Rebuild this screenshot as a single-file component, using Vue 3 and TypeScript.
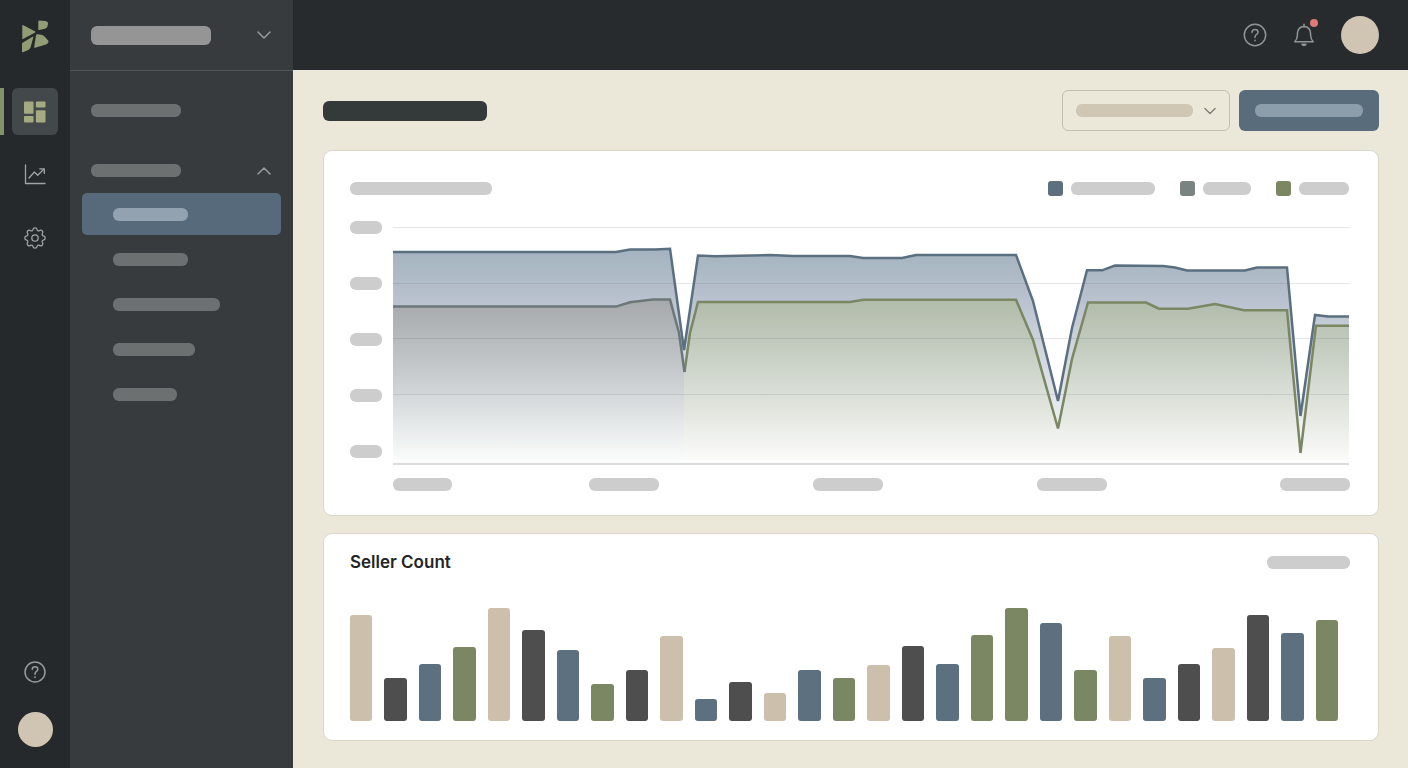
<script setup lang="ts">
type Tone = 'sand' | 'dark' | 'blue' | 'green'

interface Bar {
  tone: Tone
  value: number
}

const navItems: { id: string; size: string; active: boolean }[] = [
  { id: 'first', size: 'w75', active: true },
  { id: 'second', size: 'w75', active: false },
  { id: 'third', size: 'w107', active: false },
  { id: 'fourth', size: 'w82', active: false },
  { id: 'fifth', size: 'w64', active: false },
]

const bars: Bar[] = [
  { tone: 'sand', value: 106 },
  { tone: 'dark', value: 43 },
  { tone: 'blue', value: 57 },
  { tone: 'green', value: 74 },
  { tone: 'sand', value: 113 },
  { tone: 'dark', value: 91 },
  { tone: 'blue', value: 71 },
  { tone: 'green', value: 37 },
  { tone: 'dark', value: 51 },
  { tone: 'sand', value: 85 },
  { tone: 'blue', value: 22 },
  { tone: 'dark', value: 39 },
  { tone: 'sand', value: 28 },
  { tone: 'blue', value: 51 },
  { tone: 'green', value: 43 },
  { tone: 'sand', value: 56 },
  { tone: 'dark', value: 75 },
  { tone: 'blue', value: 57 },
  { tone: 'green', value: 86 },
  { tone: 'green', value: 113 },
  { tone: 'blue', value: 98 },
  { tone: 'green', value: 51 },
  { tone: 'sand', value: 85 },
  { tone: 'blue', value: 43 },
  { tone: 'dark', value: 57 },
  { tone: 'sand', value: 73 },
  { tone: 'dark', value: 106 },
  { tone: 'blue', value: 88 },
  { tone: 'green', value: 101 },
]
const maxValue = Math.max(...bars.map((b) => b.value))

type Point = [number, number]

const blue: Point[] = [
  [0, 31], [223, 31], [237, 28.5], [262, 28.5], [277, 27.7], [291, 129], [305, 34.5], [322, 35.2],
  [377, 34], [400, 35], [457, 35], [470, 37], [509, 37], [523, 34], [623, 34], [640, 80],
  [665, 180], [679, 107], [694, 49.3], [709, 49.3], [722, 44.5], [770, 45], [782, 46.5], [794, 49.5],
  [852, 49.5], [864, 46.5], [894, 46.5], [907.5, 195], [922, 94], [935, 95.5], [956, 95.5],
]
const gray: Point[] = [
  [0, 85.6], [223, 85.6], [237, 81.3], [260, 78.6], [277, 78.6], [286, 112], [291.5, 151],
]
const green: Point[] = [
  [291.5, 151], [297, 112], [305, 81], [457, 81], [470, 78.7], [623, 78.7], [640, 119], [665, 207.5],
  [679, 138], [695, 81.5], [753, 81.5], [766, 87.7], [795, 87.7], [822, 83], [851, 89.3], [894, 89.3],
  [907.5, 232], [923, 104.7], [956, 104.7],
]

const baseline = 243
const line = (pts: Point[]): string => 'M' + pts.map((p) => p.join(' ')).join('L')
const area = (pts: Point[]): string =>
  `${line(pts)}L${pts[pts.length - 1][0]} ${baseline}L${pts[0][0]} ${baseline}Z`

const gearPath = ((): string => {
  const at = (deg: number): string => {
    const a = (deg * Math.PI) / 180
    return `${(12 + 8.6 * Math.cos(a)).toFixed(2)} ${(12 + 8.6 * Math.sin(a)).toFixed(2)}`
  }
  let d = `M${at(-14)}`
  for (let k = 0; k < 8; k++) {
    d += `A2.1 2.1 0 0 1 ${at(k * 45 + 14)}A1.5 1.5 0 0 0 ${at(k * 45 + 31)}`
  }
  return d + 'Z'
})()
</script>

<template>
  <div class="app">
    <nav class="rail" aria-label="Primary">
      <a class="logo" href="#" aria-label="Home">
        <svg viewBox="0 0 28 34" width="28" height="34">
          <path d="M1.3 5.3Q1.3 4.7 2 5L14.2 11.6Q14.9 12 14.2 12.4L2 19Q1.3 19.4 1.3 18.7Z" />
          <path d="M17.3 1.4Q17.3.6 18.1.6L24.5 1Q27.3 1.6 27 4L26.4 6.6Q26 8.2 24 8.7L18.2 10Q17.3 10.2 17.3 9.4Z" />
          <path d="M1 23.5Q1.4 22.8 2 22.4L11.5 16.7Q12.6 16.2 12.3 17.3L9.7 27Q9.2 28.9 7.6 29.7L2 32.2Q1 32.6 1 31.6Z" />
          <path d="M15 15.3Q15.3 14 16.5 14.2L20.3 14.8Q22.6 15.4 24 17L27.2 20.4Q28 21.8 27 23Q26.4 24 25 24.4L14.2 27.7Q13 28 13.2 26.9Z" />
        </svg>
      </a>
      <a class="rail-item active" href="#" aria-label="Dashboard" aria-current="page">
        <svg viewBox="0 0 24 24" width="24" height="24" fill="currentColor">
          <rect x="1" y="1.5" width="9.5" height="12.2" rx="1" />
          <rect x="12.9" y="1.5" width="9.6" height="6" rx="1" />
          <rect x="1" y="16" width="9.5" height="6.5" rx="1" />
          <rect x="12.9" y="10.3" width="9.6" height="12.2" rx="1" />
        </svg>
      </a>
      <a class="rail-item" href="#" aria-label="Analytics">
        <svg class="stroke thin" viewBox="0 0 24 24" width="24" height="24">
          <path d="M2.5 2V20.5H22" />
          <path d="M6 15L11.4 9L14.7 12.3L20.8 6.2" />
          <path d="M16.8 5.8H21.3V10.4" />
        </svg>
      </a>
      <a class="rail-item" href="#" aria-label="Settings">
        <svg class="stroke thin" viewBox="0 0 24 24" width="24" height="24">
          <path :d="gearPath" />
          <circle cx="12" cy="12" r="3.2" />
        </svg>
      </a>
      <div class="rail-foot">
        <a class="rail-help" href="#" aria-label="Help">
          <svg class="stroke" viewBox="0 0 24 24" width="24" height="24">
            <circle cx="12" cy="12" r="10" />
            <path d="M9.2 9.4Q9.3 6.8 12 6.8Q14.8 6.8 14.8 9.3Q14.8 10.7 13.2 11.7Q12 12.5 12 14.3" />
            <path d="M12 16.8V17.4" />
          </svg>
        </a>
        <button class="avatar small" type="button" aria-label="Profile"></button>
      </div>
    </nav>

    <aside class="sidebar">
      <button class="workspace" type="button" aria-label="Switch workspace">
        <span class="pill tall w120"></span>
        <svg class="stroke" viewBox="0 0 14 8" width="14" height="8"><path d="M1 1L7 7L13 1" /></svg>
      </button>
      <nav class="menu" aria-label="Secondary">
        <button class="section" type="button" aria-label="Section one"><span class="pill w90"></span></button>
        <button class="section last" type="button" aria-label="Section two" aria-expanded="true">
          <span class="pill w90"></span>
          <svg class="stroke" viewBox="0 0 14 8" width="14" height="8"><path d="M1 7L7 1L13 7" /></svg>
        </button>
        <ul>
          <li v-for="item in navItems" :key="item.id">
            <a href="#" :class="{ active: item.active }" :aria-label="item.id"><span class="pill" :class="item.size"></span></a>
          </li>
        </ul>
      </nav>
    </aside>

    <div class="page">
      <header class="topbar">
        <button class="icon-button" type="button" aria-label="Help">
          <svg class="stroke" viewBox="0 0 24 24" width="24" height="24">
            <circle cx="12" cy="12" r="10.7" />
            <path d="M9 9.4Q9.1 6.5 12 6.5Q15 6.5 15 9.2Q15 10.7 13.3 11.7Q12 12.5 12 14.6" />
            <path d="M12 17.2V17.8" />
          </svg>
        </button>
        <button class="icon-button" type="button" aria-label="Notifications">
          <svg class="stroke" viewBox="0 0 24 24" width="24" height="24">
            <path d="M12 1.2V3.4" />
            <path d="M2.7 18.8Q5.2 16.5 5.4 12.5V10.4Q5.8 3.7 12 3.4Q18.2 3.7 18.6 10.4V12.5Q18.8 16.5 21.3 18.8Z" />
            <path d="M10 21.3H14Q13.6 22.4 12 22.4Q10.4 22.4 10 21.3Z" />
          </svg>
          <span class="dot"></span>
        </button>
        <button class="avatar" type="button" aria-label="Account"></button>
      </header>

      <main class="content">
        <div class="page-head">
          <div class="pill page-title"></div>
          <div class="actions">
            <div class="select-box">
              <select aria-label="Range"><option></option></select>
              <div class="select-face">
                <span class="pill w117"></span>
                <svg class="stroke" viewBox="0 0 14 8" width="12" height="8"><path d="M1 1L7 7L13 1" /></svg>
              </div>
            </div>
            <button class="primary" type="button" aria-label="Create"><span class="pill"></span></button>
          </div>
        </div>

        <section class="card trend">
          <div class="card-head">
            <span class="pill w142"></span>
            <ul class="legend">
              <li><i class="blue"></i><span class="pill w84"></span></li>
              <li><i class="gray"></i><span class="pill w48"></span></li>
              <li><i class="green"></i><span class="pill w50"></span></li>
            </ul>
          </div>
          <div class="chart">
            <div class="y-axis"><span v-for="n in 5" :key="n" class="pill"></span></div>
            <svg class="plot" viewBox="0 0 956 244" preserveAspectRatio="none" role="img" aria-label="Trend">
              <defs>
                <linearGradient id="fillBlue" gradientUnits="userSpaceOnUse" x1="0" y1="28" x2="0" y2="243">
                  <stop offset="0" stop-color="#a3b3bf" />
                  <stop offset=".25" stop-color="#bac3cf" />
                  <stop offset=".5" stop-color="#d2d8df" />
                  <stop offset=".8" stop-color="#eceef1" />
                  <stop offset="1" stop-color="#fff" />
                </linearGradient>
                <linearGradient id="fillGray" gradientUnits="userSpaceOnUse" x1="0" y1="79" x2="0" y2="243">
                  <stop offset="0" stop-color="#a7a9ab" />
                  <stop offset=".22" stop-color="#b5b9bc" />
                  <stop offset=".5" stop-color="#cbcfd2" />
                  <stop offset=".75" stop-color="#e4e8e8" />
                  <stop offset="1" stop-color="#fdfdfd" />
                </linearGradient>
                <linearGradient id="fillGreen" gradientUnits="userSpaceOnUse" x1="0" y1="79" x2="0" y2="243">
                  <stop offset="0" stop-color="#b2bcaa" />
                  <stop offset=".25" stop-color="#c1c9bd" />
                  <stop offset=".5" stop-color="#d4dad1" />
                  <stop offset=".75" stop-color="#e8ebe5" />
                  <stop offset="1" stop-color="#fdfdfd" />
                </linearGradient>
              </defs>
              <path :d="area(blue)" fill="url(#fillBlue)" />
              <path :d="area(gray)" fill="url(#fillGray)" />
              <path :d="area(green)" fill="url(#fillGreen)" />
              <path class="grid" d="M0 6.5H956M0 62.5H956M0 117.5H956M0 173.5H956" />
              <path class="base" d="M0 243H956" />
              <path class="series s-blue" :d="line(blue)" />
              <path class="series s-green" :d="line(green)" />
              <path class="series s-gray" :d="line(gray)" />
            </svg>
          </div>
          <div class="x-axis">
            <span class="pill w59"></span>
            <span class="pill w70"></span>
            <span class="pill w70"></span>
            <span class="pill w70"></span>
            <span class="pill w70"></span>
          </div>
        </section>

        <section class="card sellers">
          <div class="card-head">
            <h2>Seller Count</h2>
            <span class="pill w83"></span>
          </div>
          <div class="bars" role="img" aria-label="Seller Count">
            <span
              v-for="(bar, i) in bars"
              :key="i"
              :class="bar.tone"
              :style="{ height: (bar.value / maxValue) * 100 + '%' }"
            ></span>
          </div>
        </section>
      </main>
    </div>
  </div>
</template>

<style>
body {
  margin: 0;
  background: #ebe8d9;
}
</style>

<style scoped>
* {
  box-sizing: border-box;
}
.app {
  display: grid;
  grid-template-columns: 70px 223px minmax(0, 1fr);
  min-height: 100vh;
  font-family: Inter, "Liberation Sans", sans-serif;
  background: #ebe8d9;
}
button {
  padding: 0;
  border: 0;
  background: none;
  color: inherit;
  font: inherit;
  cursor: pointer;
}
ul {
  margin: 0;
  padding: 0;
  list-style: none;
}
svg {
  display: block;
}
.stroke {
  fill: none;
  stroke: currentColor;
  stroke-width: 1.5;
  stroke-linecap: round;
  stroke-linejoin: round;
}
.stroke.thin {
  stroke-width: 1.3;
}
.pill {
  display: block;
  height: 13px;
  border-radius: 6px;
  background: #cdcdcd;
}
.w48 { width: 48px; }
.w50 { width: 50px; }
.w59 { width: 59px; }
.w64 { width: 64px; }
.w70 { width: 70px; }
.w75 { width: 75px; }
.w82 { width: 82px; }
.w83 { width: 83px; }
.w84 { width: 84px; }
.w90 { width: 90px; }
.w107 { width: 107px; }
.w117 { width: 117px; }
.w120 { width: 120px; }
.w142 { width: 142px; }

.rail {
  display: flex;
  flex-direction: column;
  align-items: center;
  gap: 16px;
  padding: 20px 0 21px;
  background: #25292b;
  color: #a0a4a5;
}
.logo {
  margin-bottom: 18px;
  fill: #929d76;
}
.rail-item {
  display: grid;
  place-items: center;
  align-self: stretch;
  height: 47px;
  margin: 0 12px;
  border-radius: 6px;
  color: #a0a4a5;
}
.rail-item.active {
  position: relative;
  background: #43484b;
  color: #a4ab80;
}
.rail-item.active::before {
  content: "";
  position: absolute;
  left: -12px;
  top: 0;
  bottom: 0;
  width: 4px;
  background: #84926a;
}
.rail-foot {
  display: flex;
  flex-direction: column;
  align-items: center;
  gap: 28px;
  margin-top: auto;
}
.rail-help {
  color: #969a9b;
}
.avatar {
  width: 38px;
  height: 38px;
  border-radius: 50%;
  background: #d0c5b2;
}
.avatar.small {
  width: 35px;
  height: 35px;
}

.sidebar {
  background: #373b3d;
  color: #979b9c;
}
.workspace {
  display: flex;
  align-items: center;
  justify-content: space-between;
  width: 100%;
  height: 71px;
  padding: 0 22px 0 21px;
  border-bottom: 1px solid #515758;
}
.pill.tall {
  height: 19px;
  background: #959595;
}
.menu {
  padding: 17px 12px;
}
.section {
  display: flex;
  align-items: center;
  justify-content: space-between;
  width: 100%;
  height: 45px;
  margin-bottom: 15px;
  padding: 0 10px 0 9px;
}
.section.last {
  margin-bottom: 0;
}
.menu .pill {
  background: #6c7071;
}
.menu ul {
  display: grid;
  gap: 3px;
}
.menu a {
  display: flex;
  align-items: center;
  height: 42px;
  padding-left: 31px;
  border-radius: 5px;
}
.menu a.active {
  background: #566a7c;
}
.menu a.active .pill {
  background: #92a2b0;
}

.page {
  display: flex;
  flex-direction: column;
}
.topbar {
  display: flex;
  align-items: center;
  justify-content: flex-end;
  gap: 25px;
  height: 70px;
  padding: 0 29px;
  background: #272b2d;
  color: #8f9495;
}
.icon-button {
  position: relative;
}
.dot {
  position: absolute;
  top: -4px;
  right: -2px;
  width: 8px;
  height: 8px;
  border-radius: 50%;
  background: #df7b74;
}
.content {
  padding: 20px 29px 27px 30px;
}
.page-head {
  display: flex;
  align-items: center;
  justify-content: space-between;
  margin-bottom: 19px;
}
.page-title {
  width: 164px;
  height: 20px;
  background: #34393a;
}
.actions {
  display: flex;
  gap: 9px;
}
.select-box {
  display: grid;
  width: 168px;
  height: 41px;
}
.select-box > * {
  grid-area: 1 / 1;
}
select {
  width: 100%;
  height: 100%;
  border: 1px solid #c4bfad;
  border-radius: 6px;
  background: transparent;
  appearance: none;
}
.select-face {
  display: flex;
  align-items: center;
  justify-content: space-between;
  padding: 0 14px;
  color: #7b7c74;
  pointer-events: none;
}
.select-face .pill {
  background: #cfc6b4;
}
.primary {
  width: 140px;
  padding: 0 16px;
  border-radius: 6px;
  background: #586c7b;
}
.primary .pill {
  background: #8c9dab;
}

.card {
  border: 1px solid #dad7cb;
  border-radius: 9px;
  background: #fff;
}
.card-head {
  display: flex;
  align-items: center;
  justify-content: space-between;
}
.trend {
  margin-bottom: 17px;
  padding: 30px 28px 24px 26px;
}
.legend {
  display: flex;
  gap: 25px;
  padding-right: 1px;
}
.legend li {
  display: flex;
  align-items: center;
  gap: 8px;
}
.legend i {
  width: 15px;
  height: 15px;
  border-radius: 3px;
}
.chart {
  display: flex;
  gap: 11px;
  margin-top: 25px;
  padding-right: 1px;
}
.y-axis {
  display: grid;
  flex: none;
  align-content: start;
  gap: 43px;
  width: 32px;
}
.plot {
  flex: 1;
  min-width: 0;
  height: 244px;
}
.plot path {
  vector-effect: non-scaling-stroke;
}
.grid {
  fill: none;
  stroke: rgba(80, 95, 95, 0.15);
  stroke-width: 1;
}
.base {
  stroke: #dcdcdc;
  stroke-width: 2;
}
.series {
  fill: none;
  stroke-width: 2.5;
}
.s-blue { stroke: #5a6f80; }
.s-gray { stroke: #6c7779; }
.s-green { stroke: #7a8762; }
.x-axis {
  display: grid;
  grid-template-columns: 196fr 224fr 224fr 243fr 70px;
  margin: 13px 0 0 43px;
}
.sellers {
  padding: 16px 28px 19px 26px;
}
h2 {
  margin: 0;
  color: #222425;
  font-size: 17px;
  font-weight: 600;
  font-optical-sizing: none;
  line-height: 24px;
}
.bars {
  display: flex;
  align-items: flex-end;
  gap: 12px;
  height: 113px;
  margin: 34px 12px 0 0;
}
.bars span {
  flex: 1;
  border-radius: 3px;
}
.sand { background: #ccc0ac; }
.dark { background: #4e4e4e; }
.blue { background: #5c7080; }
.green { background: #7b8762; }
.gray { background: #7b8282; }
</style>
